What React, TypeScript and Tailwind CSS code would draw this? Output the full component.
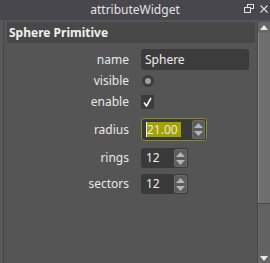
import React from "react";

const font = { fontFamily: '"Noto Sans", "DejaVu Sans", sans-serif' };

function SpinArrows({ h }: { h: number }) {
  return (
    <div
      className="ml-auto mr-[1px] flex w-[13px] flex-col items-center justify-center gap-[3px] rounded-[2px] border border-[#6a6a6a] bg-[#5c5c5c]"
      style={{ height: h }}
    >
      <svg width="9" height="5" viewBox="0 0 9 5">
        <polygon points="0,5 4.5,0 9,5" fill="#b4b4b4" />
      </svg>
      <svg width="9" height="5" viewBox="0 0 9 5">
        <polygon points="0,0 4.5,5 9,0" fill="#b4b4b4" />
      </svg>
    </div>
  );
}

function Row({
  label,
  children,
  mt,
}: {
  label: string;
  children: React.ReactNode;
  mt: string;
}) {
  return (
    <div className={`flex items-center ${mt}`}>
      <div className="w-[125px] text-right text-[12px] leading-none text-[#e8e8e8]">
        {label}
      </div>
      <div className="ml-[12px] flex items-center">{children}</div>
    </div>
  );
}

export default function App() {
  return (
    <div
      className="flex h-[263px] w-[270px] flex-col overflow-hidden bg-[#555555]"
      style={font}
    >
      {/* title bar */}
      <div className="relative flex h-[20px] shrink-0 items-center justify-center bg-[#47474d]">
        <span className="text-[12px] leading-none text-[#e4e4e4]">attributeWidget</span>
        <div className="absolute right-[2px] top-[4px] flex items-center gap-[6px]">
          <svg width="10" height="9" viewBox="0 0 10 9">
            <rect x="3.5" y="0.5" width="6" height="4" fill="none" stroke="#e0e0e0" />
            <rect x="0.5" y="3.5" width="6" height="5" fill="#47474d" stroke="#e0e0e0" />
          </svg>
          <svg width="8" height="8" viewBox="0 0 8 8">
            <path d="M0.5 0.5 L7.5 7.5 M7.5 0.5 L0.5 7.5" stroke="#e0e0e0" strokeWidth="1.1" />
          </svg>
        </div>
      </div>

      {/* body */}
      <div className="flex flex-1">
        <div className="w-[3px] bg-[#585858]" />
        <div className="flex-1 border-l border-[#464646]">
          <div className="ml-[3px] mr-[2px] mt-[2px] flex h-[21px] items-center bg-[#484848] pl-[2px]">
            <span className="text-[12px] font-bold leading-none text-[#f0f0f0]">
              Sphere Primitive
            </span>
          </div>

          <div className="flex flex-col">
            <Row label="name" mt="mt-[6px]">
              <div className="flex h-[21px] w-[108px] items-center rounded-[3px] bg-[#3c3c3c] pl-[4px] text-[12px] text-[#eeeeee]">
                Sphere
              </div>
            </Row>
            <Row label="visible" mt="mt-[5px]">
              <div className="ml-[1px] flex h-[12px] w-[12px] items-center justify-center rounded-full bg-[#3c3c3c]">
                <div className="h-[6px] w-[6px] rounded-full bg-[#a0a0a0]" />
              </div>
            </Row>
            <Row label="enable" mt="mt-[8px]">
              <div className="flex h-[14px] w-[13px] items-center justify-center bg-[#3c3c3c]">
                <svg width="9" height="10" viewBox="0 0 9 10">
                  <path d="M1 5.5 L3.5 9 L8 1" fill="none" stroke="#f2f2f2" strokeWidth="1.6" />
                </svg>
              </div>
            </Row>
            <Row label="radius" mt="mt-[9px]">
              <div className="flex h-[23px] w-[66px] items-center rounded-[3px] border border-[#8a8a26] bg-[#3a3a3a]">
                <div className="ml-[4px] flex h-[15px] items-center bg-[#a3a300] pr-[3px]">
                  <div className="h-[15px] w-[1px] bg-white" />
                  <span className="text-[12px] leading-none text-[#e8e8e0]">21.00</span>
                </div>
                <SpinArrows h={19} />
              </div>
            </Row>
            <Row label="rings" mt="mt-[7px]">
              <div className="flex h-[20px] w-[47px] items-center rounded-[3px] bg-[#3a3a3a]">
                <span className="pl-[5px] text-[12px] leading-none text-[#eeeeee]">12</span>
                <SpinArrows h={18} />
              </div>
            </Row>
            <Row label="sectors" mt="mt-[6px]">
              <div className="flex h-[20px] w-[47px] items-center rounded-[3px] bg-[#3a3a3a]">
                <span className="pl-[5px] text-[12px] leading-none text-[#eeeeee]">12</span>
                <SpinArrows h={18} />
              </div>
            </Row>
          </div>
        </div>

        {/* scrollbar */}
        <div className="mt-[2px] flex w-[13px] flex-col border-l border-[#474747]">
          <div className="flex h-[11px] items-center justify-center bg-[#676767]">
            <svg width="8" height="5" viewBox="0 0 8 5">
              <polygon points="0,5 4,0 8,5" fill="#e8e8e8" />
            </svg>
          </div>
          <div className="h-[170px] border-l border-[#888888] bg-[#6e6e6e]" />
          <div className="flex-1 border-t border-[#4a4a4a] bg-[#626262]" />
          <div className="flex h-[8px] items-start justify-center bg-[#676767] pt-[1px]">
            <svg width="8" height="5" viewBox="0 0 8 5">
              <polygon points="0,0 4,5 8,0" fill="#e8e8e8" />
            </svg>
          </div>
        </div>
      </div>
    </div>
  );
}
